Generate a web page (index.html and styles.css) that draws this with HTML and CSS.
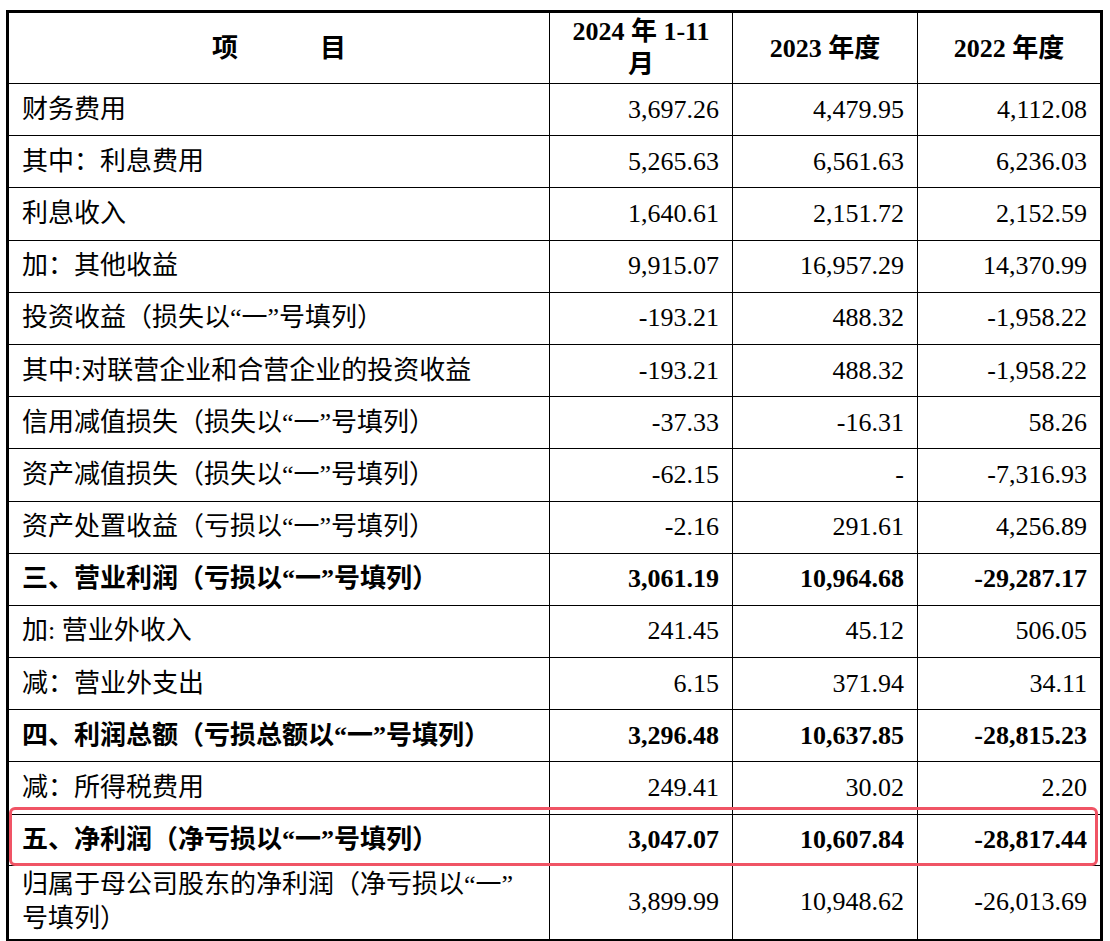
FILE: index.html
```html
<!DOCTYPE html>
<html lang="zh">
<head>
<meta charset="utf-8">
<link rel="stylesheet" href="styles.css">
</head>
<body>
<div class="wrap">
<table class="fin">
  <colgroup>
    <col class="c1"><col class="c2"><col class="c3"><col class="c4">
  </colgroup>
  <thead>
    <tr class="head">
      <th class="item">项<span class="gap"></span>目</th>
      <th>2024 年 1-11<br>月</th>
      <th>2023 年度</th>
      <th class="last">2022 年度</th>
    </tr>
  </thead>
  <tbody>
    <tr><td>财务费用</td><td>3,697.26</td><td>4,479.95</td><td class="last">4,112.08</td></tr>
    <tr><td>其中：利息费用</td><td>5,265.63</td><td>6,561.63</td><td class="last">6,236.03</td></tr>
    <tr><td>利息收入</td><td>1,640.61</td><td>2,151.72</td><td class="last">2,152.59</td></tr>
    <tr><td>加：其他收益</td><td>9,915.07</td><td>16,957.29</td><td class="last">14,370.99</td></tr>
    <tr><td>投资收益（损失以“一”号填列）</td><td>-193.21</td><td>488.32</td><td class="last">-1,958.22</td></tr>
    <tr><td>其中:对联营企业和合营企业的投资收益</td><td>-193.21</td><td>488.32</td><td class="last">-1,958.22</td></tr>
    <tr><td>信用减值损失（损失以“一”号填列）</td><td>-37.33</td><td>-16.31</td><td class="last">58.26</td></tr>
    <tr><td>资产减值损失（损失以“一”号填列）</td><td>-62.15</td><td>-</td><td class="last">-7,316.93</td></tr>
    <tr><td>资产处置收益（亏损以“一”号填列）</td><td>-2.16</td><td>291.61</td><td class="last">4,256.89</td></tr>
    <tr class="bold"><td>三、营业利润（亏损以“一”号填列）</td><td>3,061.19</td><td>10,964.68</td><td class="last">-29,287.17</td></tr>
    <tr><td>加: 营业外收入</td><td>241.45</td><td>45.12</td><td class="last">506.05</td></tr>
    <tr><td>减：营业外支出</td><td>6.15</td><td>371.94</td><td class="last">34.11</td></tr>
    <tr class="bold"><td>四、利润总额（亏损总额以“一”号填列）</td><td>3,296.48</td><td>10,637.85</td><td class="last">-28,815.23</td></tr>
    <tr><td>减：所得税费用</td><td>249.41</td><td>30.02</td><td class="last">2.20</td></tr>
    <tr class="bold net"><td>五、净利润（净亏损以“一”号填列）</td><td>3,047.07</td><td>10,607.84</td><td class="last">-28,817.44</td></tr>
    <tr class="tall"><td>归属于母公司股东的净利润（净亏损以“一”<br>号填列）</td><td>3,899.99</td><td>10,948.62</td><td class="last">-26,013.69</td></tr>
  </tbody>
</table>
<div class="highlight"></div>
</div>
</body>
</html>
```

FILE: styles.css
```css
html, body {
  margin: 0;
  padding: 0;
  background: #ffffff;
}

body {
  padding: 10px 0 0 6px;
}

.wrap {
  position: relative;
  width: 1097px;
}

.fin {
  border-collapse: separate;
  border-spacing: 0;
  border: 3px solid #000;
  width: 1097px;
  table-layout: fixed;
  font-family: "Liberation Serif", "Noto Sans CJK SC", serif;
  font-size: 26px;
  color: #000;
}

.c1 { width: 541px; }
.c2 { width: 183px; }
.c3 { width: 185px; }
.c4 { width: 182px; }

.fin th,
.fin td {
  border-right: 1px solid #000;
  border-bottom: 1px solid #000;
  padding: 0 13px;
  vertical-align: middle;
  white-space: nowrap;
  box-sizing: border-box;
}

.fin th.last,
.fin td.last {
  border-right: none;
}

.fin tbody tr:last-child td {
  border-bottom: none;
}

.head th {
  height: 71px;
  font-weight: bold;
  text-align: center;
  line-height: 33px;
  padding: 0 4px;
}

.gap {
  display: inline-block;
  width: 82px;
}

.fin td {
  height: 52.2px;
  line-height: 30px;
  text-align: right;
}

.fin td:first-child {
  text-align: left;
}

.bold td {
  font-weight: bold;
}

.net td {
  height: 51px;
}

.tall td {
  height: 73px;
  line-height: 34px;
}

.highlight {
  position: absolute;
  left: 3px;
  top: 797px;
  width: 1089px;
  height: 59px;
  border: 3px solid #f05465;
  border-radius: 6px;
  box-sizing: border-box;
  pointer-events: none;
}
```
